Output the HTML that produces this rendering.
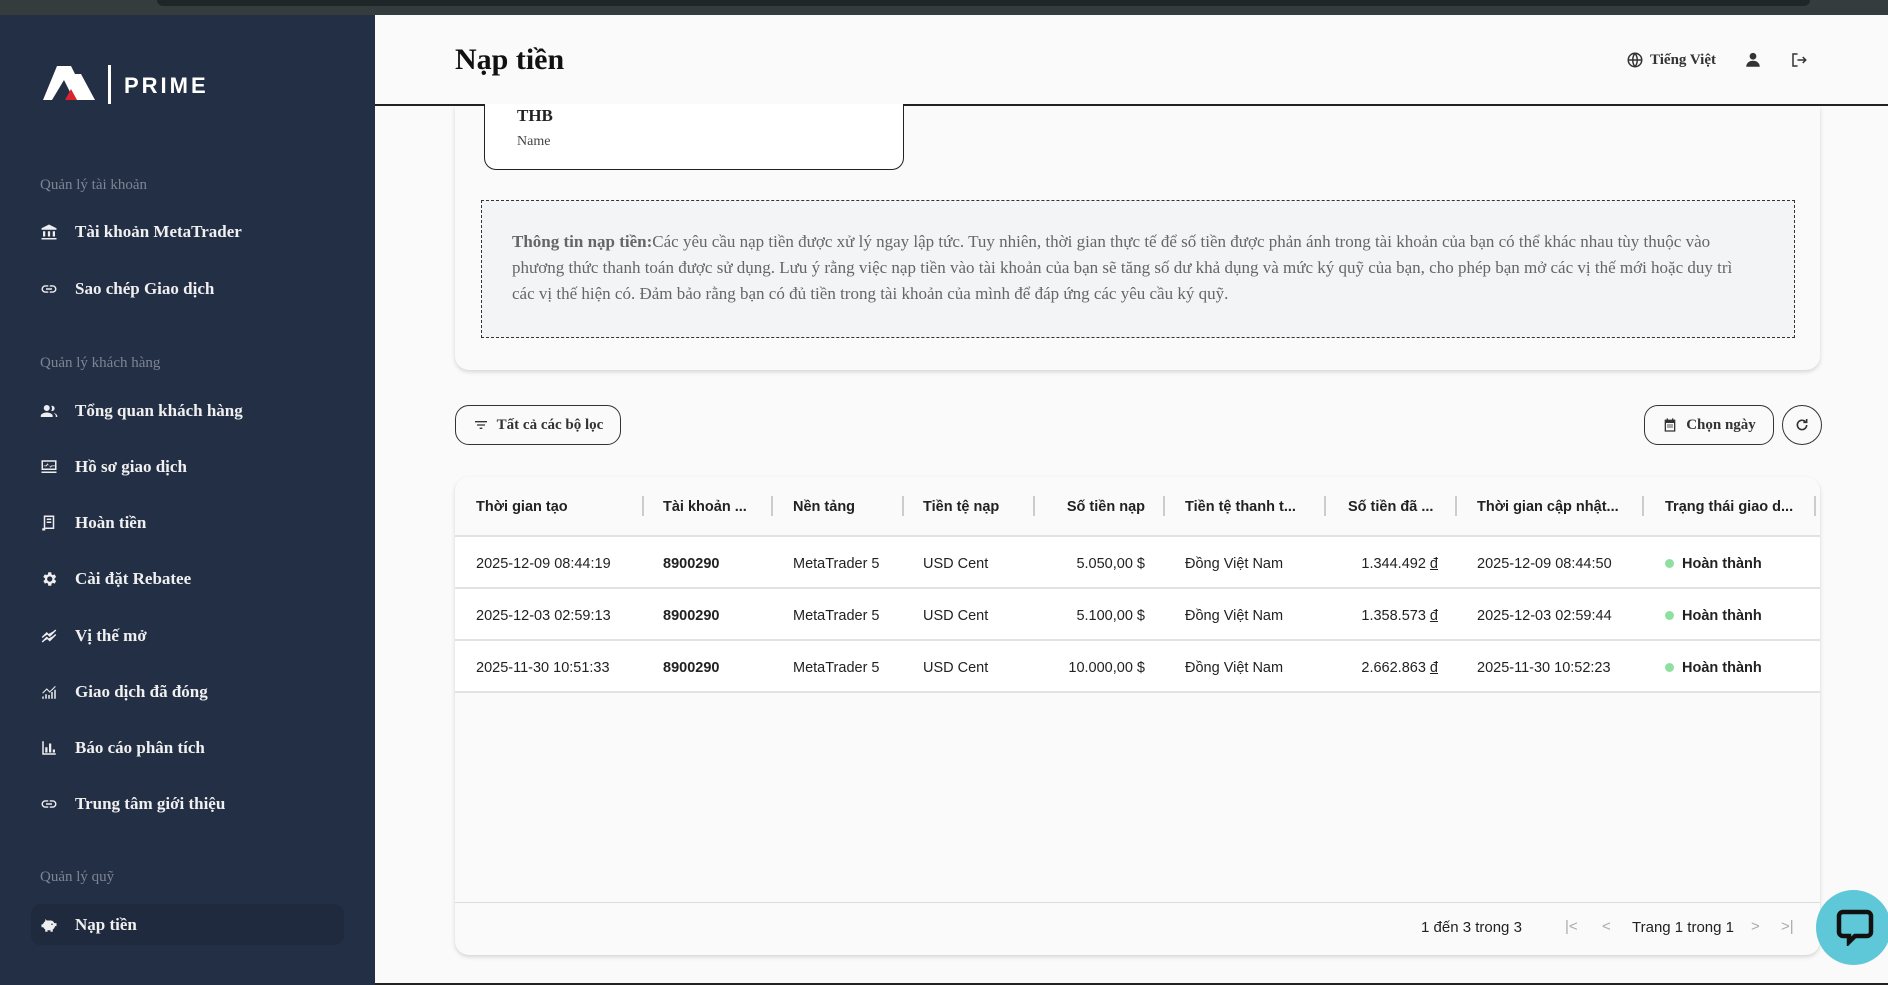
<!DOCTYPE html>
<html><head><meta charset="utf-8"><style>
*{box-sizing:border-box;margin:0;padding:0}
body{width:1888px;height:985px;overflow:hidden;background:#fafafa;font-family:"Liberation Serif",serif;position:relative}
.top{position:absolute;left:0;top:0;width:1888px;height:15px;background:#343c3e}
.top i{position:absolute;left:157px;top:0;width:1653px;height:6px;background:#1f2628;border-radius:0 0 10px 10px}
.sb{position:absolute;left:0;top:15px;width:375px;height:970px;background:#232f45;color:#eee}
.sec{position:absolute;left:40px;font-size:15px;color:#7c8594}
.it{position:absolute;left:40px;font-size:17px;font-weight:bold;color:#f0f0f0;display:flex;align-items:center;height:24px}
.it svg{width:18px;height:18px;margin-right:17px;fill:#eee}
.act{position:absolute;left:31px;top:889px;width:313px;height:41px;background:#1f2a3e;border-radius:10px}
.hdr{position:absolute;left:375px;top:15px;width:1513px;height:91px;background:#fafafa;border-bottom:2px solid #222}
h1{position:absolute;left:80px;top:28px;font-size:30px;font-weight:bold;color:#111}
.hr{position:absolute;right:80px;top:36px;display:flex;align-items:center;font-size:15px;font-weight:bold;color:#333}
.card1{position:absolute;left:455px;top:106px;width:1365px;height:264px;background:#fafafa;border-radius:0 0 14px 14px;box-shadow:0 2px 4px rgba(0,0,0,.15)}
.thb{position:absolute;left:29px;top:-2px;width:420px;height:66px;border:1.5px solid #222;border-top:none;border-radius:0 0 12px 12px;background:#fff}
.dash{position:absolute;left:26px;top:94px;width:1314px;height:138px;border:1.5px dashed #333;background:#f3f4f6;padding:28px 46px 28px 30px;font-size:17px;line-height:26px;color:#666}
.btn{position:absolute;top:405px;height:40px;border:1.5px solid #333;border-radius:14px;display:flex;align-items:center;justify-content:center;font-size:15px;font-weight:bold;color:#333;background:#fafafa}
.tbl{position:absolute;left:455px;top:477px;width:1365px;height:478px;background:#fafafa;border-radius:14px;box-shadow:0 2px 4px rgba(0,0,0,.15);font-family:"Liberation Sans",sans-serif;font-size:14.5px;color:#222;overflow:hidden}
.row{position:absolute;left:0;width:1365px;height:52px;border-bottom:2px solid #e2e2e2;background:#fff}
.row span,.th span{position:absolute;top:0;line-height:54px;white-space:nowrap}
.th{position:absolute;left:0;top:0;width:1365px;height:60px;border-bottom:2px solid #e2e2e2}
.th span{line-height:60px;font-weight:bold}
.th b{position:absolute;top:19px;width:1.5px;height:20px;background:#ccc}
.dot{display:inline-block;width:9px;height:9px;border-radius:50%;background:#8fe0a0;margin-right:8px}
.ft{position:absolute;left:0;top:425px;width:1365px;height:1px;background:#ddd}
u{text-decoration:underline}
</style></head><body>
<div class="top"><i></i></div>
<div class="sb">
 <svg style="position:absolute;left:43px;top:51px" width="56" height="36" viewBox="0 0 56 36"><path d="M14 0h14l17 34H31L21 14 9 34H0z" fill="#fff"/><path d="M28 8h10l14 26h-9z" fill="#fff"/><path d="M22 34l6-11 6 11z" fill="#d9232d"/></svg>
 <div style="position:absolute;left:108px;top:50px;width:3px;height:39px;background:#fff"></div>
 <div style="position:absolute;left:124px;top:58px;font-family:'Liberation Sans',sans-serif;font-size:22px;font-weight:bold;letter-spacing:3px;color:#fff">PRIME</div>
 <div class="sec" style="top:162px">Quản lý tài khoản</div>
 <div class="it" style="top:205px"><svg viewBox="0 0 24 24"><path d="M12 2 2 7v2h20V7zM4 11h3v7H4zm6.5 0h3v7h-3zM17 11h3v7h-3zM2 20h20v2H2z"/></svg>Tài khoản MetaTrader</div>
 <div class="it" style="top:262px"><svg viewBox="0 0 24 24"><path d="M3.9 12a3.1 3.1 0 0 1 3.1-3.1h4V7H7a5 5 0 0 0 0 10h4v-1.9H7A3.1 3.1 0 0 1 3.9 12M8 13h8v-2H8zm9-6h-4v1.9h4a3.1 3.1 0 0 1 0 6.2h-4V17h4a5 5 0 0 0 0-10"/></svg>Sao chép Giao dịch</div>
 <div class="sec" style="top:340px">Quản lý khách hàng</div>
 <div class="it" style="top:384px"><svg viewBox="0 0 24 24"><path d="M9 12a4 4 0 1 0 0-8 4 4 0 0 0 0 8m0 2c-3 0-8 1.5-8 4.5V20h16v-1.5C17 15.5 12 14 9 14m7-2a3.5 3.5 0 0 0 0-7c-.4 0-.8 0-1 .2a6 6 0 0 1 0 6.6c.3.1.6.2 1 .2m2 2.5c1.4.9 3 2.2 3 4V20h2v-1.5c0-2-3-3.5-5-4"/></svg>Tổng quan khách hàng</div>
 <div class="it" style="top:440px"><svg viewBox="0 0 24 24"><path d="M2 3h20v13H2zm2 2v9h16V5zm1 5h3l2-3 3 5 2-2h6v1h-5l-2 2-3-5-2 3H5zM2 18h20v2H2z"/></svg>Hồ sơ giao dịch</div>
 <div class="it" style="top:496px"><svg viewBox="0 0 24 24"><path d="M5 2h14v18H5zm2 2v14h10V4zm2 2h6v2H9zm0 4h6v2H9zm-6 9h4v3H3z"/></svg>Hoàn tiền</div>
 <div class="it" style="top:552px"><svg viewBox="0 0 24 24"><path d="M19.4 13a7 7 0 0 0 0-2l2.1-1.6-2-3.5-2.5 1a7 7 0 0 0-1.7-1L15 3h-4l-.4 2.9a7 7 0 0 0-1.7 1l-2.5-1-2 3.5L6.6 11a7 7 0 0 0 0 2l-2.1 1.6 2 3.5 2.5-1a7 7 0 0 0 1.7 1L11 21h4l.4-2.9a7 7 0 0 0 1.7-1l2.5 1 2-3.5zM13 15.5a3.5 3.5 0 1 1 0-7 3.5 3.5 0 0 1 0 7"/></svg>Cài đặt Rebatee</div>
 <div class="it" style="top:609px"><svg viewBox="0 0 24 24" fill="none" stroke="#eee" stroke-width="2"><path d="M3 14l6-6 4 4 8-8M3 20l6-6 4 4 8-8"/></svg>Vị thế mở</div>
 <div class="it" style="top:665px"><svg viewBox="0 0 24 24"><path d="M3 18h2v3H3zm4-3h2v6H7zm4 1h2v5h-2zm4-4h2v9h-2zm4-3h2v12h-2zM3 13l6-6 4 4 7-7 1 1-8 8-4-4-5 5z"/></svg>Giao dịch đã đóng</div>
 <div class="it" style="top:721px"><svg viewBox="0 0 24 24"><path d="M3 3h2v16h16v2H3zm4 8h3v7H7zm5-5h3v12h-3zm5 8h3v4h-3z"/></svg>Báo cáo phân tích</div>
 <div class="it" style="top:777px"><svg viewBox="0 0 24 24"><path d="M3.9 12a3.1 3.1 0 0 1 3.1-3.1h4V7H7a5 5 0 0 0 0 10h4v-1.9H7A3.1 3.1 0 0 1 3.9 12M8 13h8v-2H8zm9-6h-4v1.9h4a3.1 3.1 0 0 1 0 6.2h-4V17h4a5 5 0 0 0 0-10"/></svg>Trung tâm giới thiệu</div>
 <div class="sec" style="top:854px">Quản lý quỹ</div>
 <div class="act"></div>
 <div class="it" style="top:898px"><svg viewBox="0 0 24 24"><path d="M19 9.5c-.6-2-2.6-3.5-5-3.5H9L7 4v3C5.3 8 4.4 9.4 4.1 11H2v4h2.5c.6 1.4 1.5 2.4 2.5 3v3h3v-2h4v2h3v-3c1.6-1 2.8-2.6 3-4.5H22V9.5zM16 12a1 1 0 1 1 0-2 1 1 0 0 1 0 2"/></svg>Nạp tiền</div>
</div>
<div class="hdr"><h1>Nạp tiền</h1>
 <div class="hr"><svg width="18" height="18" viewBox="0 0 24 24" fill="none" stroke="#333" stroke-width="2"><circle cx="12" cy="12" r="9"/><path d="M3 12h18M12 3c-4 5-4 13 0 18M12 3c4 5 4 13 0 18"/></svg><span style="margin-left:6px">Tiếng Việt</span>
 <svg style="margin-left:28px" width="18" height="18" viewBox="0 0 24 24" fill="#333"><circle cx="12" cy="7" r="4.5"/><path d="M3 21c0-5 4-8 9-8s9 3 9 8z"/></svg>
 <svg style="margin-left:28px" width="18" height="18" viewBox="0 0 24 24" fill="none" stroke="#333" stroke-width="2"><path d="M10 4H4v16h6M10 12h11M17 8l4 4-4 4"/></svg></div>
</div>
<div class="card1">
 <div class="thb"><div style="position:absolute;left:32px;top:2px;font-size:17px;font-weight:bold;color:#222">THB</div><div style="position:absolute;left:32px;top:30px;font-size:14px;color:#444">Name</div></div>
 <div class="dash"><b>Thông tin nạp tiền:</b>Các yêu cầu nạp tiền được xử lý ngay lập tức. Tuy nhiên, thời gian thực tế để số tiền được phản ánh trong tài khoản của bạn có thể khác nhau tùy thuộc vào phương thức thanh toán được sử dụng. Lưu ý rằng việc nạp tiền vào tài khoản của bạn sẽ tăng số dư khả dụng và mức ký quỹ của bạn, cho phép bạn mở các vị thế mới hoặc duy trì các vị thế hiện có. Đảm bảo rằng bạn có đủ tiền trong tài khoản của mình để đáp ứng các yêu cầu ký quỹ.</div>
</div>
<div class="btn" style="left:455px;width:166px"><svg width="16" height="16" viewBox="0 0 24 24" fill="#333" style="margin-right:8px"><path d="M3 6h18v2H3zm3 5h12v2H6zm4 5h4v2h-4z"/></svg>Tất cả các bộ lọc</div>
<div class="btn" style="left:1644px;width:130px"><svg width="16" height="16" viewBox="0 0 24 24" fill="#333" style="margin-right:8px"><path d="M7 2h2v2h6V2h2v2h3v18H4V4h3zm-1 7v11h12V9zm2 2h2v2H8zm3 0h2v2h-2zm3 0h2v2h-2zm-6 3h2v2H8zm3 0h2v2h-2zm3 0h2v2h-2z"/></svg>Chọn ngày</div>
<div class="btn" style="left:1782px;width:40px;border-radius:50%"><svg width="16" height="16" viewBox="0 0 24 24" fill="none" stroke="#333" stroke-width="2.4"><path d="M19 12a7 7 0 1 1-2-5M19 3v5h-5"/></svg></div>
<div class="tbl">
 <div class="th"><span style="left:21px">Thời gian tạo</span><b style="left:187px"></b><span style="left:208px">Tài khoản ...</span><b style="left:316px"></b><span style="left:338px">Nền tảng</span><b style="left:447px"></b><span style="left:468px">Tiền tệ nạp</span><b style="left:578px"></b><span style="left:560px;width:130px;text-align:right">Số tiền nạp</span><b style="left:708px"></b><span style="left:730px">Tiền tệ thanh t...</span><b style="left:869px"></b><span style="left:893px">Số tiền đã ...</span><b style="left:1000px"></b><span style="left:1022px">Thời gian cập nhật...</span><b style="left:1187px"></b><span style="left:1210px">Trạng thái giao d...</span><b style="left:1359px"></b></div>
 <div class="row" style="top:60px"><span style="left:21px">2025-12-09 08:44:19</span><span style="left:208px;font-weight:bold">8900290</span><span style="left:338px">MetaTrader 5</span><span style="left:468px">USD Cent</span><span style="left:540px;width:150px;text-align:right">5.050,00 $</span><span style="left:730px">Đồng Việt Nam</span><span style="left:833px;width:150px;text-align:right">1.344.492 <u>đ</u></span><span style="left:1022px">2025-12-09 08:44:50</span><span style="left:1210px;font-weight:bold"><i class="dot"></i>Hoàn thành</span></div>
 <div class="row" style="top:112px"><span style="left:21px">2025-12-03 02:59:13</span><span style="left:208px;font-weight:bold">8900290</span><span style="left:338px">MetaTrader 5</span><span style="left:468px">USD Cent</span><span style="left:540px;width:150px;text-align:right">5.100,00 $</span><span style="left:730px">Đồng Việt Nam</span><span style="left:833px;width:150px;text-align:right">1.358.573 <u>đ</u></span><span style="left:1022px">2025-12-03 02:59:44</span><span style="left:1210px;font-weight:bold"><i class="dot"></i>Hoàn thành</span></div>
 <div class="row" style="top:164px"><span style="left:21px">2025-11-30 10:51:33</span><span style="left:208px;font-weight:bold">8900290</span><span style="left:338px">MetaTrader 5</span><span style="left:468px">USD Cent</span><span style="left:540px;width:150px;text-align:right">10.000,00 $</span><span style="left:730px">Đồng Việt Nam</span><span style="left:833px;width:150px;text-align:right">2.662.863 <u>đ</u></span><span style="left:1022px">2025-11-30 10:52:23</span><span style="left:1210px;font-weight:bold"><i class="dot"></i>Hoàn thành</span></div>
 <div class="ft"></div>
 <div style="position:absolute;left:966px;top:442px;font-size:15px">1 đến 3 trong 3</div>
 <div style="position:absolute;left:1110px;top:441px;font-size:15px;color:#aaa">|&lt;</div>
 <div style="position:absolute;left:1147px;top:441px;font-size:15px;color:#aaa">&lt;</div>
 <div style="position:absolute;left:1177px;top:442px;font-size:15px">Trang 1 trong 1</div>
 <div style="position:absolute;left:1296px;top:441px;font-size:15px;color:#aaa">&gt;</div>
 <div style="position:absolute;left:1326px;top:441px;font-size:15px;color:#aaa">&gt;|</div>
</div>
<div style="position:absolute;left:1816px;top:890px;width:75px;height:75px;border-radius:50%;background:#5fc8d8"></div>
<svg style="position:absolute;left:1836px;top:908px" width="38" height="38" viewBox="0 0 38 38"><path d="M7 4h24a4 4 0 0 1 4 4v16a4 4 0 0 1-4 4H19l-6 6v-6H7a4 4 0 0 1-4-4V8a4 4 0 0 1 4-4z" fill="none" stroke="#111" stroke-width="4.5"/></svg>
<div style="position:absolute;left:375px;top:983px;width:1513px;height:2px;background:#222"></div>
</body></html>
